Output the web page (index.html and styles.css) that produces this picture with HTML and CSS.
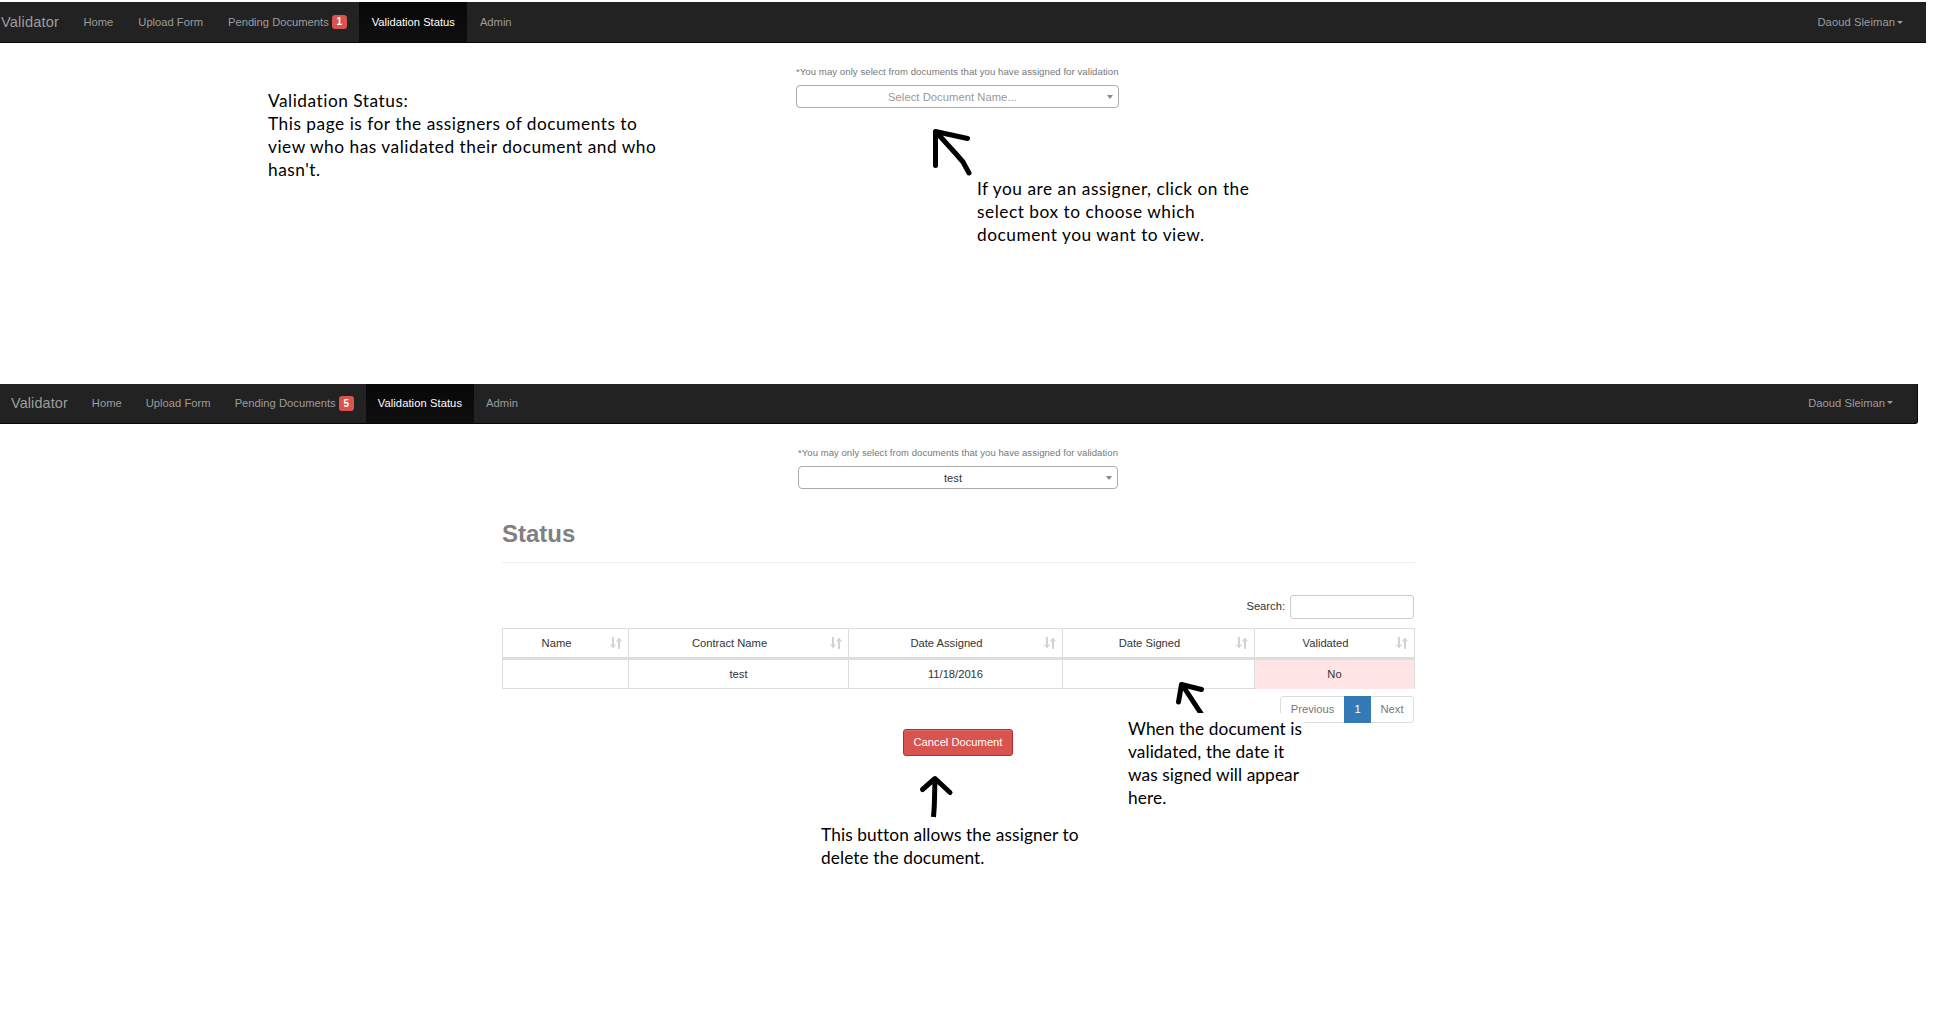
FILE: index.html
```html
<!DOCTYPE html>
<html lang="en">
<head>
<meta charset="utf-8">
<title>Validation Status</title>
<link rel="stylesheet" href="styles.css">
</head>
<body>
<section class="screen screen-empty">
  <nav class="navbar">
    <a class="brand">Validator</a>
    <a class="item">Home</a>
    <a class="item">Upload Form</a>
    <a class="item">Pending Documents <span class="badge">1</span></a>
    <a class="item active">Validation Status</a>
    <a class="item">Admin</a>
    <a class="item user">Daoud Sleiman<span class="caret"></span></a>
  </nav>
  <div class="picker">
    <p class="hint">*You may only select from documents that you have assigned for validation</p>
    <div class="select placeholder"><span>Select Document Name...</span><i class="arrow"></i></div>
  </div>
</section>

<section class="screen screen-result">
  <nav class="navbar">
    <a class="brand">Validator</a>
    <a class="item">Home</a>
    <a class="item">Upload Form</a>
    <a class="item">Pending Documents <span class="badge">5</span></a>
    <a class="item active">Validation Status</a>
    <a class="item">Admin</a>
    <a class="item user">Daoud Sleiman<span class="caret"></span></a>
  </nav>
  <div class="picker">
    <p class="hint">*You may only select from documents that you have assigned for validation</p>
    <div class="select"><span>test</span><i class="arrow"></i></div>
  </div>
  <main class="status">
    <h1>Status</h1>
    <div class="search"><label for="q">Search:</label><input id="q" type="text"></div>
    <table>
      <colgroup><col class="c1"><col class="c2"><col class="c3"><col class="c4"><col class="c5"></colgroup>
      <thead>
        <tr>
          <th><div class="head"><span>Name</span><svg class="sort" viewBox="0 0 12 12"><path d="M3 0v8M9 12V4"/><path class="tip" d="M0 7.500h6L3 11.500zM6 4.500h6L9 .5z"/></svg></div></th>
          <th><div class="head"><span>Contract Name</span><svg class="sort" viewBox="0 0 12 12"><path d="M3 0v8M9 12V4"/><path class="tip" d="M0 7.500h6L3 11.500zM6 4.500h6L9 .5z"/></svg></div></th>
          <th><div class="head"><span>Date Assigned</span><svg class="sort" viewBox="0 0 12 12"><path d="M3 0v8M9 12V4"/><path class="tip" d="M0 7.500h6L3 11.500zM6 4.500h6L9 .5z"/></svg></div></th>
          <th><div class="head"><span>Date Signed</span><svg class="sort" viewBox="0 0 12 12"><path d="M3 0v8M9 12V4"/><path class="tip" d="M0 7.500h6L3 11.500zM6 4.500h6L9 .5z"/></svg></div></th>
          <th><div class="head"><span>Validated</span><svg class="sort" viewBox="0 0 12 12"><path d="M3 0v8M9 12V4"/><path class="tip" d="M0 7.500h6L3 11.500zM6 4.500h6L9 .5z"/></svg></div></th>
        </tr>
      </thead>
      <tbody>
        <tr><td></td><td>test</td><td>11/18/2016</td><td></td><td class="no">No</td></tr>
      </tbody>
    </table>
    <div class="pager"><a>Previous</a><a class="current">1</a><a>Next</a></div>
    <button class="cancel" type="button">Cancel Document</button>
  </main>
</section>

<!-- annotations laid over the two screens -->
<p class="note note-page">Validation Status:<br>This page is for the assigners of documents to<br>view who has validated their document and who<br>hasn't.</p>
<p class="note note-select">If you are an assigner, click on the<br>select box to choose which<br>document you want to view.</p>
<p class="note note-signed">When the document is<br>validated, the date it<br>was signed will appear<br>here.</p>
<p class="note note-cancel">This button allows the assigner to<br>delete the document.</p>
<svg class="pointer pointer-select" viewBox="0 0 50 60"><path d="M10.500 41.500V7.500L42.500 14.500M12 9L32 31L38 38L44 49"/></svg>
<svg class="pointer pointer-signed" viewBox="0 0 50 37"><path d="M8.500 26L11.500 8.500L31.500 13.500M13 10L34 42"/></svg>
<svg class="pointer pointer-cancel" viewBox="0 0 50 50"><path d="M12.500 19.500L25 8.500L40 22.500"/><path class="stem" d="M25 9L24.300 36L23.500 47"/></svg>
</body>
</html>
```
FILE: styles.css
```css
* { box-sizing: border-box; }
body {
  position: relative;
  margin: 0;
  height: 1026px;
  padding-top: 2px;
  overflow: hidden;
  background: #fff;
  color: #333;
  font: 11.2px/16px "Liberation Sans", Arial, sans-serif;
}
p, h1 { margin: 0; }
.screen-empty { height: 382px; }

/* navigation */
.navbar {
  display: flex;
  align-items: stretch;
  height: 40px;
  background: #222;
  border-bottom: 1px solid #080808;
  color: #9d9d9d;
  white-space: nowrap;
}
.brand, .item { display: flex; align-items: center; padding: 0 12px; }
.brand { font-size: 14.4px; }
.active { background: linear-gradient(#080808, #0f0f0f); color: #fff; }
.badge {
  margin-left: 3px;
  width: 15px;
  height: 14px;
  border-radius: 3px;
  background: #d9534f;
  color: #fff;
  font-weight: bold;
  font-size: 10px;
  line-height: 14px;
  text-align: center;
}
.user { margin-left: auto; }
.caret {
  margin-left: 2px;
  border: 3px solid transparent;
  border-top-color: #9d9d9d;
  border-bottom: 0;
}
.screen-empty .navbar { width: 1926px; height: 41px; }
.screen-empty .brand { padding-left: 1px; font-size: 14.6px; letter-spacing: .16px; }
.screen-empty .item { padding: 0 12.5px; }
.screen-empty .user { padding-right: 23px; letter-spacing: .08px; }
.screen-result .navbar { width: 1918px; border-right: 1px solid #080808; border-bottom-right-radius: 3px; }
.screen-result .brand { padding-left: 11px; padding-bottom: 1px; letter-spacing: .12px; }
.screen-result .item { padding-bottom: 2px; letter-spacing: .02px; }
.screen-result .badge { height: 15px; line-height: 15px; position: relative; top: 1px; }
.screen-result .item.active { letter-spacing: .07px; }
.screen-result .user { padding-right: 24px; }

/* document picker */
.picker { width: 320px; margin: 21px 0 0 798px; }
.hint { color: #777; font-size: 9.52px; letter-spacing: .055px; white-space: nowrap; }
.select {
  display: flex;
  align-items: center;
  height: 23px;
  margin-top: 5px;
  padding: 0 5px 0 6px;
  border: 1px solid #aaa;
  border-radius: 4px;
}
.select span { flex: 1; text-align: center; padding-right: 5px; color: #333; }
.select.placeholder span { color: #999; letter-spacing: .06px; }
.arrow { border: 3px solid transparent; border-top: 4px solid #888; border-bottom: 0; }
.screen-empty .picker { width: 323px; margin-left: 796px; }
.screen-empty .hint { font-size: 9.6px; }

/* status table */
.status { width: 913px; margin: 28px 0 0 502px; display: flex; flex-direction: column; }
h1 { height: 46px; border-bottom: 1px solid #eee; color: #808080; font-size: 24px; line-height: 34px; }
.search { display: flex; justify-content: flex-end; align-items: center; gap: 5px; height: 24px; margin-top: 32px; }
.search label { padding-bottom: 2px; }
.search input { width: 124px; height: 24px; border: 1px solid #ccc; border-radius: 3px; margin-right: 1px; }
table { width: 913px; margin-top: 9px; border-collapse: separate; border-spacing: 0; table-layout: fixed; border-left: 1px solid #ddd; }
.c1 { width: 126px; }
.c2 { width: 220px; }
.c3 { width: 214px; }
.c4 { width: 192px; }
.c5 { width: 160px; }
th, td { padding: 0; border-right: 1px solid #ddd; font-weight: normal; text-align: center; }
th { height: 32px; border-top: 1px solid #ddd; border-bottom: 3px solid #ddd; }
td { height: 29px; border-bottom: 1px solid #ddd; }
.head { display: flex; align-items: center; padding: 0 6px; height: 28px; }
.head span { flex: 1; padding-right: 6px; }
.sort { width: 12px; height: 12px; fill: none; stroke: #d3d3d3; stroke-width: 2; }
.sort .tip { fill: #d3d3d3; stroke: none; }
.no { background: #ffe5e5; border-bottom-color: #ffe5e5; }
.pager { display: flex; align-self: flex-end; width: 134px; height: 27px; margin: 7px 1px 0 0; border: 1px solid #ddd; border-radius: 3px; color: #777; line-height: 25px; text-align: center; }
.pager a { width: 42px; }
.pager a:first-child { width: 63px; }
.pager .current { width: 27px; margin: -1px 0; line-height: 27px; background: #337ab7; color: #fff; }
.cancel {
  width: 110px;
  height: 27px;
  margin: 6px 0 0 401px;
  padding: 0 0 2px;
  border: 1px solid #b92c28;
  border-radius: 3px;
  background: #d9534f;
  box-shadow: inset 0 1px rgba(255, 255, 255, .15);
  color: #fff;
  font: inherit;
}

/* annotations */
.note {
  position: absolute;
  background: #fff;
  color: #000;
  font: 17.3px/23px Lato, sans-serif;
  white-space: nowrap;
}
.note-page { left: 268px; top: 89px; letter-spacing: .52px; }
.note-select { left: 977px; top: 177px; letter-spacing: .52px; }
.note-signed { left: 1118px; top: 713px; width: 186px; padding: 4px 0 0 10px; letter-spacing: .08px; }
.note-cancel { left: 821px; top: 823px; letter-spacing: .1px; }
.pointer { position: absolute; fill: none; stroke: #000; stroke-width: 5; stroke-linecap: round; stroke-linejoin: round; }
.pointer-select { left: 925px; top: 124px; width: 50px; height: 60px; }
.pointer-signed { left: 1170px; top: 676px; width: 50px; height: 37px; }
.pointer-cancel { left: 910px; top: 770px; width: 50px; height: 50px; }
.pointer .stem { stroke-linecap: butt; }
```
